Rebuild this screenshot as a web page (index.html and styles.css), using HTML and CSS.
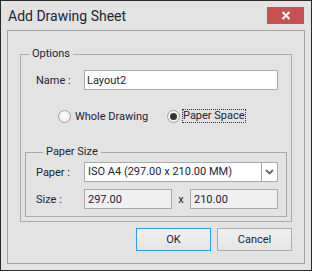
FILE: index.html
```html
<!DOCTYPE html>
<html lang="en">
<head>
<meta charset="UTF-8">
<title>Add Drawing Sheet</title>
<link rel="stylesheet" href="styles.css">
</head>
<body>
<div class="dialog">
  <div class="titlebar">
    <span class="title">Add Drawing Sheet</span>
    <button class="close"><svg width="10" height="9" viewBox="0 0 10 9"><path d="M1.5 1 L8.5 8 M8.5 1 L1.5 8" stroke="#fff" stroke-width="2"/></svg></button>
  </div>
  <div class="panel">
    <fieldset class="group options">
      <legend>Options</legend>
      <div class="row name-row">
        <span class="lbl">Name :</span>
        <input class="field name" type="text" value="Layout2">
      </div>
      <div class="radios">
        <span class="radio first"><span class="circle"></span>Whole Drawing</span>
        <span class="radio"><span class="circle on"></span><span class="focus">Paper Space</span></span>
      </div>
      <fieldset class="group paper">
        <legend>Paper Size</legend>
        <div class="row paper-row">
          <span class="lbl">Paper :</span>
          <div class="select">
            <span class="value">ISO A4 (297.00 x 210.00 MM)</span>
            <span class="arrow"><svg width="9" height="6" viewBox="0 0 9 6"><path d="M1 1 L4.5 4.5 L8 1" fill="none" stroke="#666" stroke-width="1.8"/></svg></span>
          </div>
        </div>
        <div class="row size-row">
          <span class="lbl">Size :</span>
          <input class="field size" type="text" value="297.00" readonly>
          <span class="times">x</span>
          <input class="field size" type="text" value="210.00" readonly>
        </div>
      </fieldset>
    </fieldset>
    <div class="actions">
      <button class="btn default">OK</button>
      <button class="btn">Cancel</button>
    </div>
  </div>
</div>
</body>
</html>
```
FILE: styles.css
```css
*{box-sizing:border-box}
body{margin:0;font-family:Roboto,"Noto Sans",sans-serif;font-size:11px;color:#1c2436}
.dialog{width:312px;height:271px;background:#e3e3e3;border:1px solid #2b2b2b}
.titlebar{height:29px;display:flex;justify-content:space-between;align-items:flex-start;padding:0 7px 0 7px}
.title{font-size:14px;line-height:30px}
.close{margin-top:6px;width:37px;height:17px;background:#c75050;border:0;padding:0;display:flex;align-items:center;justify-content:center}
.panel{margin:0 6px;height:234px;border:1px solid #a3a3a3;padding:15px 12px 0 12px}
.group{margin:0;padding:0;border:1px solid #a9a9a9;min-width:0}
.group legend{padding:0 3px;margin-left:8px;line-height:16px}
.paper legend{margin-left:7px}
.row{display:flex;align-items:center;height:20px}
.lbl{flex:none;width:48px}
.name-row{margin-top:8px;padding-left:15px}
.field{font:inherit;color:inherit;height:20px;border:1px solid #a9a9a9;background:#fff;padding:0 2px;margin:0;outline:none}
.field.name{width:194px}
.radios{display:flex;align-items:center;height:20px;margin-top:16px;padding-left:37px}
.radio{display:flex;align-items:center}
.radio.first{width:109px}
.circle{width:13px;height:13px;border-radius:50%;border:1px solid #a0a0a0;background:radial-gradient(circle at 50% 40%,#fff,#e6e6e6);margin-right:4px;display:flex;align-items:center;justify-content:center}
.circle.on{margin-right:2px}
.circle.on::after{content:"";width:7px;height:7px;border-radius:50%;background:#333}
.focus{border:1px dotted #333;line-height:11px;padding:0 0 1px 0;margin-top:-1px}
.paper{margin:18px 4px 4px 4px;padding:0 8px 7px 10px}
.paper-row{margin-top:2px}
.size-row{margin-top:7px}
.select{display:flex;width:194px;height:20px;border:1px solid #a9a9a9;background:#fff}
.select .value{flex:1;padding-left:3px;line-height:18px;white-space:nowrap}
.select .arrow{width:16px;border-left:1px solid #a9a9a9;display:flex;align-items:center;justify-content:center}
.field.size{width:88px;background:#f0f0f0;padding-left:3px}
.times{width:18px;text-align:center}
.actions{display:flex;justify-content:flex-end;gap:6px;margin-top:6px}
.btn{font:inherit;color:inherit;width:75px;height:23px;border:1px solid #acacac;background:linear-gradient(#f0f0f0,#e5e5e5);padding:0}
.btn.default{border-color:#3399ff}
```
